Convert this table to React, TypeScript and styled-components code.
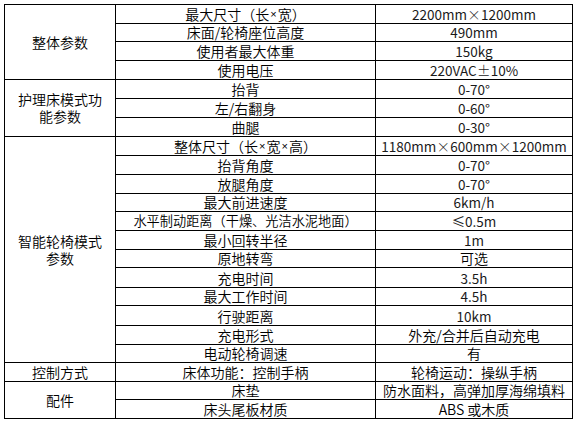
import { Fragment } from 'react';
import styled, { createGlobalStyle } from 'styled-components';

type Row = { label: string; value: string; h: number; tight?: boolean };
type Group = { title: string; rows: Row[] };

const groups: Group[] = [
  {
    title: '整体参数',
    rows: [
      { label: '最大尺寸（长×宽）', value: '2200mm×1200mm', h: 18 },
      { label: '床面/轮椅座位高度', value: '490mm', h: 17 },
      { label: '使用者最大体重', value: '150kg', h: 18 },
      { label: '使用电压', value: '220VAC±10%', h: 18 },
    ],
  },
  {
    title: '护理床模式功能参数',
    rows: [
      { label: '抬背', value: '0-70°', h: 18 },
      { label: '左/右翻身', value: '0-60°', h: 18 },
      { label: '曲腿', value: '0-30°', h: 18 },
    ],
  },
  {
    title: '智能轮椅模式参数',
    rows: [
      { label: '整体尺寸（长×宽×高）', value: '1180mm×600mm×1200mm', h: 18 },
      { label: '抬背角度', value: '0-70°', h: 18 },
      { label: '放腿角度', value: '0-70°', h: 18 },
      { label: '最大前进速度', value: '6km/h', h: 17 },
      { label: '水平制动距离（干燥、光洁水泥地面）', value: '≤0.5m', h: 18, tight: true },
      { label: '最小回转半径', value: '1m', h: 18 },
      { label: '原地转弯', value: '可选', h: 17 },
      { label: '充电时间', value: '3.5h', h: 19 },
      { label: '最大工作时间', value: '4.5h', h: 17 },
      { label: '行驶距离', value: '10km', h: 19 },
      { label: '充电形式', value: '外充/合并后自动充电', h: 18 },
      { label: '电动轮椅调速', value: '有', h: 17 },
    ],
  },
  {
    title: '控制方式',
    rows: [{ label: '床体功能：控制手柄', value: '轮椅运动：操纵手柄', h: 18 }],
  },
  {
    title: '配件',
    rows: [
      { label: '床垫', value: '防水面料，高弹加厚海绵填料', h: 17 },
      { label: '床头尾板材质', value: 'ABS 或木质', h: 18 },
    ],
  },
];

const GlobalStyle = createGlobalStyle`
  html, body {
    margin: 0;
    background: #ffffff;
  }
  body {
    font-family: "Noto Sans CJK SC", "Liberation Sans", sans-serif;
    font-weight: 350;
    color: #000;
  }
`;

const Page = styled.div`
  padding: 4px 0 0 4px;
`;

const Table = styled.div<{ $rows: number[] }>`
  display: inline-grid;
  grid-template-columns: 110px 259px 196px;
  grid-template-rows: ${(p) => p.$rows.map((h) => `${h}px`).join(' ')};
  gap: 1px;
  padding: 1px;
  background: #000;
`;

const GroupCell = styled.div<{ $span: number }>`
  grid-column: 1;
  grid-row: span ${(p) => p.$span};
  background: #fff;
  display: flex;
  align-items: center;
  justify-content: center;
  text-align: center;
  padding: 0 12px;
  font-size: 14px;
  line-height: 17px;
`;

const Cell = styled.div<{ $col: number; $size: number; $latin?: boolean }>`
  grid-column: ${(p) => p.$col};
  background: #fff;
  display: flex;
  align-items: flex-end;
  justify-content: center;
  white-space: nowrap;
  font-size: ${(p) => p.$size}px;
  font-weight: ${(p) => (p.$latin ? 400 : 350)};
  color: ${(p) => (p.$latin ? '#1a1a1a' : '#000')};
  line-height: 14px;
  padding-bottom: 2px;
`;

const Wide = styled.span`
  display: inline-block;
  width: 14px;
  text-align: center;
  font-weight: 300;
`;

const Narrow = styled.span`
  font-family: "Liberation Sans", sans-serif;
  font-size: 11px;
  padding: 0 1px;
`;

const isLatin = (v: string) => /^[\x20-\x7e×±≤°]+$/.test(v);

const renderLabel = (v: string) =>
  v.split(/(×)/).map((part, i) =>
    part === '×' ? <Narrow key={i}>{part}</Narrow> : <Fragment key={i}>{part}</Fragment>
  );

const renderValue = (v: string) =>
  v.split(/([×±])/).map((part, i) =>
    part === '×' || part === '±' ? <Wide key={i}>{part}</Wide> : <Fragment key={i}>{part}</Fragment>
  );

const App = () => {
  const heights = groups.flatMap((g) => g.rows.map((r) => r.h));

  return (
    <Page>
      <GlobalStyle />
      <Table $rows={heights}>
        {groups.map((g) => (
          <Fragment key={g.title}>
            <GroupCell $span={g.rows.length}>{g.title}</GroupCell>
            {g.rows.map((r) => (
              <Fragment key={r.label}>
                <Cell $col={2} $size={r.tight ? 13.2 : 14}>
                  {renderLabel(r.label)}
                </Cell>
                <Cell $col={3} $size={isLatin(r.value) ? 13.5 : 14} $latin={isLatin(r.value)}>
                  {renderValue(r.value)}
                </Cell>
              </Fragment>
            ))}
          </Fragment>
        ))}
      </Table>
    </Page>
  );
};

export default App;
